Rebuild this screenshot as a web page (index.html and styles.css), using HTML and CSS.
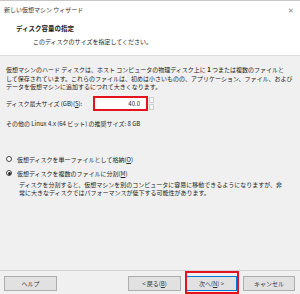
FILE: index.html
```html
<!DOCTYPE html>
<html lang="ja">
<head>
    <meta charset="UTF-8">
    <title>新しい仮想マシン ウィザード</title>
    <link rel="stylesheet" href="styles.css">
</head>
<body>
<div class="wizard">
    <header class="top">
        <div class="titlebar">
            <span>新しい仮想マシン ウィザード</span>
            <span class="close">✕</span>
        </div>
        <h1>ディスク容量の指定</h1>
        <p class="sub">このディスクのサイズを指定してください。</p>
    </header>
    <main class="content">
        <p class="desc">仮想マシンのハード ディスクは、ホスト コンピュータの物理ディスク上に <b>1</b> つまたは複数のファイルと<br>して保存されています。これらのファイルは、初めは小さいものの、アプリケーション、ファイル、および<br>データを仮想マシンに追加するにつれて大きくなります。</p>
        <div class="size-row">
            <label>ディスク最大サイズ (GB)(<u>S</u>):</label>
            <input type="text" value="40.0">
            <div class="arrows"><span></span><span></span></div>
        </div>
        <p class="recommend">その他の Linux 4.x (64 ビット) の推奨サイズ: 8 GB</p>
        <div class="options">
            <label class="radio"><span class="dot"></span>仮想ディスクを単一ファイルとして格納(<u>O</u>)</label>
            <label class="radio"><span class="dot on"></span>仮想ディスクを複数のファイルに分割(<u>M</u>)</label>
            <p class="note">ディスクを分割すると、仮想マシンを別のコンピュータに容易に移動できるようになりますが、非<br>常に大きなディスクではパフォーマンスが低下する可能性があります。</p>
        </div>
    </main>
    <footer class="buttons">
        <button class="btn">ヘルプ</button>
        <div class="spacer"></div>
        <button class="btn back">&lt; 戻る(<u>B</u>)</button>
        <button class="btn primary">次へ(<u>N</u>) &gt;</button>
        <button class="btn cancel">キャンセル</button>
    </footer>
</div>
</body>
</html>
```
FILE: styles.css
```css
* {
    box-sizing: border-box;
}
body {
    margin: 0;
    font-family: "Noto Sans CJK JP", "Noto Sans", sans-serif;
    font-size: 6px;
    color: #222;
    background: #f0f0f0;
}
.wizard {
    width: 300px;
    height: 294px;
    display: flex;
    flex-direction: column;
    border-top: 1px solid #c8c8c8;
}
.top {
    background: #fff;
    height: 55px;
    border-bottom: 1px solid #dcdcdc;
    padding: 0 6px 0 4px;
}
.titlebar {
    display: flex;
    justify-content: space-between;
    align-items: center;
    height: 17px;
    color: #333;
}
.close {
    color: #888;
    font-size: 7px;
}
h1 {
    margin: 6px 0 0 12px;
    font-size: 6.5px;
    line-height: 9px;
    font-weight: bold;
}
.sub {
    margin: 4px 0 0 29px;
    line-height: 9px;
}
.content {
    flex: 1;
    padding: 10px 0 0 6px;
    white-space: nowrap;
}
.desc {
    margin: 0;
    line-height: 8.5px;
}
.size-row {
    display: flex;
    align-items: center;
    margin-top: 4.5px;
}
.size-row label {
    width: 87px;
}
.size-row input {
    width: 55px;
    height: 15px;
    border: 2px solid #e3141e;
    text-align: right;
    font: inherit;
    color: #222;
    padding: 0 6px;
    background: #fff;
}
.arrows {
    display: flex;
    flex-direction: column;
    width: 5px;
    height: 13px;
    margin-left: 1px;
    gap: 1px;
}
.arrows span {
    flex: 1;
    border: 1px solid #cfcfcf;
    background: #f7f7f7;
}
.recommend {
    margin: 7.5px 0 0;
    line-height: 9px;
}
.options {
    margin-top: 24.5px;
}
.radio {
    display: flex;
    align-items: center;
    height: 14px;
}
.dot {
    width: 6px;
    height: 6px;
    border: 1px solid #444;
    border-radius: 50%;
    margin-right: 5px;
    display: flex;
    align-items: center;
    justify-content: center;
    background: #fff;
}
.dot.on::after {
    content: "";
    width: 3px;
    height: 3px;
    border-radius: 50%;
    background: #222;
}
.note {
    margin: 1px 0 0 13px;
    line-height: 8px;
}
.buttons {
    height: 24px;
    border-top: 1px solid #d2d2d2;
    display: flex;
    align-items: flex-start;
    padding: 5px 5px 0 4px;
}
.spacer {
    flex: 1;
}
.btn {
    width: 53px;
    height: 15px;
    font: inherit;
    color: #333;
    background: #e1e1e1;
    border: 1px solid #adadad;
    padding: 0;
}
.btn.primary {
    position: relative;
    width: 51px;
    margin-left: 5px;
    border-color: #0078d7;
}
.btn.primary::after {
    content: "";
    position: absolute;
    top: -6px;
    left: -2px;
    right: -3px;
    bottom: -4px;
    border: 2px solid #e3141e;
}
.btn.cancel {
    width: 52px;
    margin-left: 6px;
}
```
